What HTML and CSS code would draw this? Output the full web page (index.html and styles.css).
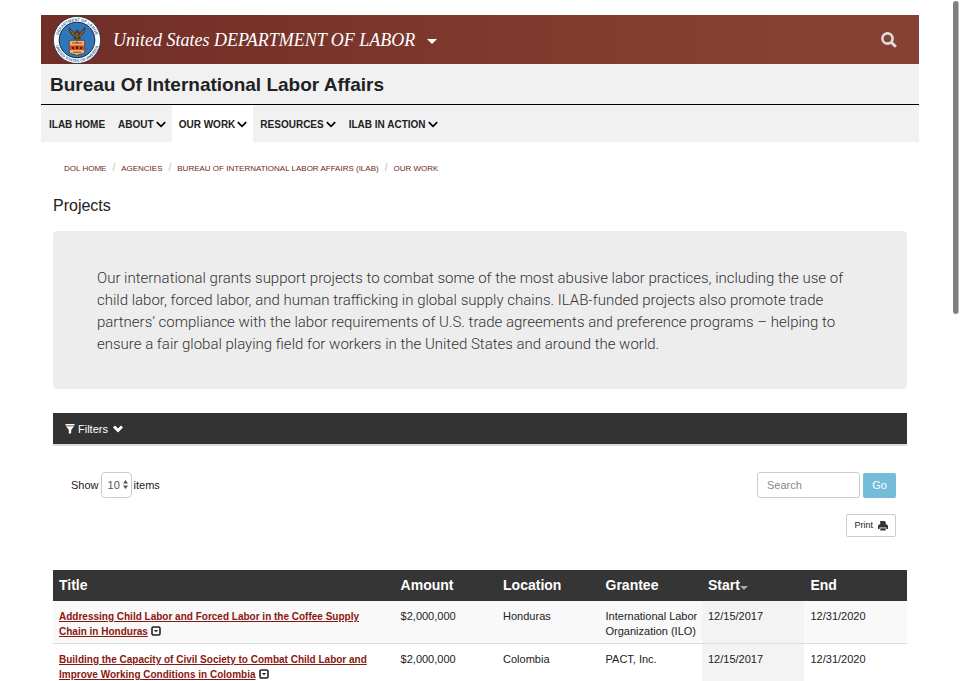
FILE: index.html
```html
<!DOCTYPE html>
<html lang="en">
<head>
<meta charset="utf-8">
<meta name="viewport" content="width=device-width, initial-scale=1">
<title>Projects | Bureau of International Labor Affairs</title>
<link rel="stylesheet" href="styles.css">
</head>
<body>
<svg class="sprite" aria-hidden="true">
  <symbol id="chevron" viewBox="0 0 10 7"><path d="M.8 1.200 5 5.400 9.200 1.200" fill="none" stroke="currentColor" stroke-width="1.700"/></symbol>
  <symbol id="expand" viewBox="0 0 10 10"><rect x="1" y="1" width="8" height="8" rx="1.400" fill="none" stroke="currentColor" stroke-width="1.600"/><path d="M2.900 4h4.200L5 6.300z" fill="currentColor"/></symbol>
</svg>
<div class="page">
  <header>
    <div class="banner">
      <svg class="seal" viewBox="0 0 48 48" role="img" aria-label="Department of Labor seal">
        <defs>
          <path id="arc-top" d="M5.800 30A19.100 19.100 0 1 1 42.200 30"/>
          <path id="arc-bottom" d="M1.900 26A22.200 22.200 0 0 0 46.100 26"/>
        </defs>
        <circle cx="24" cy="24" r="23.600" fill="#fff" stroke="#1d2b3a" stroke-width=".8"/>
        <circle cx="24" cy="24" r="17.800" fill="#2f76bd" stroke="#182532" stroke-width="1"/>
        <text class="seal-text"><textPath href="#arc-top" startOffset="50%" text-anchor="middle">DEPARTMENT OF LABOR</textPath></text>
        <text class="seal-text"><textPath href="#arc-bottom" startOffset="50%" text-anchor="middle">UNITED STATES OF AMERICA</textPath></text>
        <path d="M16 11.500c1.500 1 2.500 2.600 4 4l2.200 2.300.8-3 1.800-.9 1 1.500.4 2.200 2.300-2.500c1.300-1.500 2.200-3 3.700-3.700-.2 3.500-1.600 6.300-4 8.300l-1.700 1.300 1 2h-6.800l1-2-2-1.200c-2.400-1.900-3.700-4.500-3.700-8.300z" fill="#5a421f" stroke="#2d2617" stroke-width=".5"/>
        <path d="M17.600 14.500l4.200 5.400M30.800 14.500l-4 5.400M24 17v5" stroke="#b98c45" stroke-width=".8"/>
        <path d="M16.300 24.300h15.400v12c0 1.800-6 1.600-7.700 3.400-1.700-1.800-7.700-1.600-7.700-3.400z" fill="#efb36c" stroke="#4b321d" stroke-width=".8"/>
        <path d="M16.700 29.400h14.600v4.600H16.700z" fill="#d8432b"/>
        <path d="M19 31h2v2h-2zm4-1h2v3h-2zm4 1h2v2h-2z" fill="#4d1d14"/>
        <path d="M19 27h10M24 25v3M20 36.200h8" stroke="#76502b"/>
      </svg>
      <a class="brand" href="#">United States DEPARTMENT OF LABOR<span class="caret"></span></a>
      <button class="search-toggle" type="button" aria-label="Search site">
        <svg viewBox="0 0 16 16"><circle cx="6.500" cy="6.500" r="5.100" fill="none" stroke="currentColor" stroke-width="2.600"/><path d="M10 10l4.800 4.800" stroke="currentColor" stroke-width="3"/></svg>
      </button>
    </div>
    <div class="agency">Bureau Of International Labor Affairs</div>
    <nav class="menu" aria-label="Main">
      <a href="#">ILAB HOME</a>
      <a href="#">ABOUT <svg><use href="#chevron"/></svg></a>
      <a class="active" href="#">OUR WORK <svg><use href="#chevron"/></svg></a>
      <a href="#">RESOURCES <svg><use href="#chevron"/></svg></a>
      <a href="#">ILAB IN ACTION <svg><use href="#chevron"/></svg></a>
    </nav>
  </header>
  <main>
    <nav aria-label="Breadcrumb">
      <ol class="breadcrumb">
        <li><a href="#">DOL HOME</a></li>
        <li><a href="#">AGENCIES</a></li>
        <li><a href="#">BUREAU OF INTERNATIONAL LABOR AFFAIRS (ILAB)</a></li>
        <li><a href="#">OUR WORK</a></li>
      </ol>
    </nav>
    <h1>Projects</h1>
    <p class="intro">Our international grants support projects to combat some of the most abusive labor practices, including the use of child labor, forced labor, and human trafficking in global supply chains. ILAB-funded projects also promote trade partners’ compliance with the labor requirements of U.S. trade agreements and preference programs – helping to ensure a fair global playing field for workers in the United States and around the world.</p>
    <button class="filters" type="button">
      <svg class="funnel" viewBox="0 0 10 10"><path d="M.5 0h9v1.400h-9zM1 2.200h8L6.200 6v3L3.800 10V6z" fill="currentColor"/></svg>
      Filters
      <svg class="filters-arrow" viewBox="0 0 10 8"><path d="M1 1.500l4 4 4-4" fill="none" stroke="currentColor" stroke-width="2.800"/></svg>
    </button>
    <div class="toolbar">
      <div class="length">
        <label for="count">Show</label>
        <span class="select-wrap">
          <select id="count"><option>10</option><option>25</option><option>50</option></select>
          <svg viewBox="0 0 5 9"><path d="M2.500 0 5 3.600H0zM2.500 9 0 5.400h5z" fill="currentColor"/></svg>
        </span>
        <span>items</span>
      </div>
      <form class="search">
        <input type="search" placeholder="Search" aria-label="Search projects">
        <button type="button">Go</button>
      </form>
    </div>
    <div class="actions">
      <button class="print" type="button">Print
        <svg viewBox="0 0 10 10"><path d="M2.500 0h4L7.800 1.300V4H2.200V0z" fill="#333"/><path d="M1 3.600h8l1 1.200V8H8.400V6.600H1.600V8H0V4.800z" fill="#333"/><path d="M2.300 7.300h5.400v2.200H2.300z" fill="#333"/></svg>
      </button>
    </div>
    <table>
      <thead>
        <tr><th class="title" scope="col">Title</th><th scope="col">Amount</th><th scope="col">Location</th><th scope="col">Grantee</th><th scope="col">Start<span class="caret sort"></span></th><th scope="col">End</th></tr>
      </thead>
      <tbody>
        <tr><td class="title"><a href="#">Addressing Child Labor and Forced Labor in the Coffee Supply Chain in Honduras</a> <svg class="expand"><use href="#expand"/></svg></td><td>$2,000,000</td><td>Honduras</td><td>International Labor Organization (ILO)</td><td class="sorted">12/15/2017</td><td>12/31/2020</td></tr>
        <tr><td class="title"><a href="#">Building the Capacity of Civil Society to Combat Child Labor and Improve Working Conditions in Colombia</a> <svg class="expand"><use href="#expand"/></svg></td><td>$2,000,000</td><td>Colombia</td><td>PACT, Inc.</td><td class="sorted">12/15/2017</td><td>12/31/2020</td></tr>
      </tbody>
    </table>
  </main>
</div>
<div class="scroll-thumb" aria-hidden="true"></div>
</body>
</html>
```

FILE: styles.css
```css
* { box-sizing: border-box; }
html { overflow: hidden; }
body {
  margin: 0;
  background: #fff;
  color: #212121;
  font: 11px/15px "Liberation Sans", Arial, sans-serif;
}
a { color: inherit; text-decoration: none; }
button, input, select { font: inherit; color: inherit; }
.sprite { position: absolute; width: 0; height: 0; }
.page { margin: 15px 41px 0; }

.banner {
  display: flex;
  align-items: center;
  height: 49px;
  padding: 0 22px 0 12px;
  background: linear-gradient(90deg, #712e27, #874133 85%);
  color: #fff;
}
.seal { width: 48px; height: 48px; flex: none; }
.seal-text { font: bold 4px "Liberation Sans", sans-serif; fill: #3b6f9f; }
.brand {
  display: flex;
  align-items: center;
  margin-left: 12px;
  font: italic 18px/24px "Liberation Serif", Georgia, serif;
}
.caret {
  margin: 3px 0 0 12px;
  border: solid transparent;
  border-width: 5px 5px 0;
  border-top-color: currentColor;
}
.search-toggle {
  margin-left: auto;
  padding: 0;
  border: 0;
  background: none;
  color: #ddd;
}
.search-toggle svg { display: block; width: 16px; height: 16px; }
.agency {
  padding: 9px 9px 7px;
  border-bottom: 1px solid #000;
  background: #f1f1f1;
  font-size: 19px;
  font-weight: bold;
  line-height: 24px;
}
.menu { display: flex; padding-left: 1px; background: #f1f1f1; font-size: 10px; font-weight: bold; }
.menu a { display: flex; align-items: center; height: 37px; padding: 1px 6px 0 7px; gap: 2px; }
.menu svg { width: 10px; height: 7px; color: #000; }
.menu .active { background: #fff; }

main { padding: 0 12px; }
.breadcrumb {
  display: flex;
  align-items: baseline;
  margin: 18px 11px 0;
  padding: 0;
  list-style: none;
  color: #701f18;
  font-size: 8px;
  line-height: 16px;
}
.breadcrumb li + li::before { content: "/"; margin: 0 6px; color: #bbb; font-size: 10px; }
h1 { margin: 19px 0 15px; font-size: 16px; font-weight: normal; line-height: 20px; }
.intro {
  margin: 0 0 24px;
  padding: 36px 44px 34px;
  border-radius: 4px;
  background: #ededed;
  color: #333;
  font-family: Roboto, "Liberation Sans", sans-serif;
  font-size: 15px;
  font-weight: 300;
  line-height: 22px;
}
.filters {
  display: flex;
  align-items: center;
  width: 100%;
  height: 33px;
  padding: 1px 12px 0;
  gap: 3px;
  border: 0;
  border-bottom: 2px solid #ddd;
  background: #333;
  color: #fff;
}
.funnel { width: 10px; height: 10px; }
.filters-arrow { width: 10px; height: 8px; margin-left: 2px; }
.toolbar { display: flex; justify-content: space-between; margin: 26px 11px 0 18px; }
.length, .search { display: flex; align-items: center; gap: 3px; }
.length { gap: 2px; }
.select-wrap { position: relative; color: #555; }
.select-wrap svg { position: absolute; right: 4px; top: 8px; width: 5px; height: 9px; }
select {
  appearance: none;
  display: block;
  width: 31px;
  height: 26px;
  padding: 0 6px;
  border: 1px solid #ccc;
  border-radius: 4px;
  background: #fff;
}
.search input {
  appearance: none;
  width: 103px;
  height: 26px;
  padding: 0 9px;
  border: 1px solid #ccc;
  border-radius: 3px;
}
.search input::placeholder { color: #888; }
.search button {
  width: 33px;
  height: 25px;
  padding: 0;
  border: 0;
  border-radius: 2px;
  background: #74bcda;
  color: #fff;
}
.actions { display: flex; justify-content: flex-end; margin: 16px 11px 33px; }
.print {
  display: flex;
  align-items: center;
  gap: 5px;
  height: 23px;
  padding: 0 7px;
  border: 1px solid #ccc;
  border-radius: 2px;
  background: #fff;
  font-size: 9px;
}
.print svg { width: 10px; height: 10px; }

table { width: 100%; border-collapse: collapse; table-layout: fixed; }
th {
  height: 31px;
  padding: 0 6px;
  background: #353535;
  color: #fff;
  font-size: 14px;
  text-align: left;
}
th.title { width: 40%; }
.sort { display: inline-block; margin: 0; border-width: 4px 4px 0; border-top-color: #aaa; }
td { padding: 8px 2px 4px 6px; vertical-align: top; }
td.title { padding-right: 14px; }
tbody tr:nth-child(odd) { background: #f9f9f9; }
tbody tr + tr { border-top: 1px solid #ddd; }
td.sorted { background: #f3f3f3; }
td a { color: #8a1710; font-size: 10px; font-weight: bold; text-decoration: underline; }
.expand { width: 10px; height: 10px; vertical-align: -1px; }
.scroll-thumb {
  position: fixed;
  top: 1px;
  right: 1px;
  width: 6px;
  height: 46vh;
  border-right: 1px solid #bbb;
  border-radius: 3px;
  background: #7f7f7f;
}
```
